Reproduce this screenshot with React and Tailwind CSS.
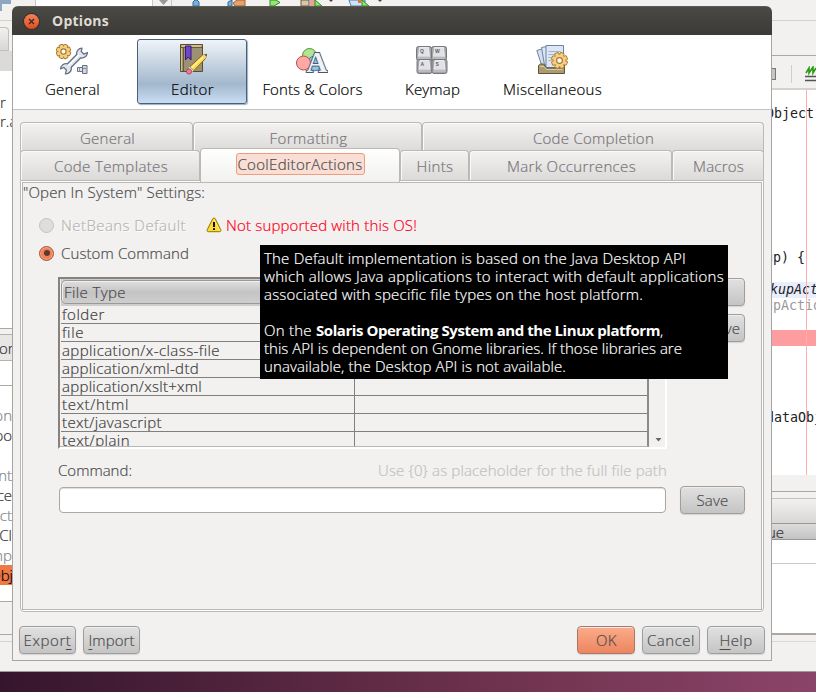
import { useLayoutEffect, useRef } from "react";

/* Text spread to an exact advance width through letter spacing. */
function Fit({ w, className = "", children }) {
  const ref = useRef(null);
  useLayoutEffect(() => {
    const el = ref.current;
    el.style.letterSpacing = "0px";
    const natural = el.getBoundingClientRect().width;
    el.style.letterSpacing = (w - natural) / el.textContent.length + "px";
  }, [w]);
  return (
    <span ref={ref} className={"inline-block shrink-0 whitespace-pre " + className}>
      {children}
    </span>
  );
}

function Gear({ cx, cy, r }) {
  const teeth = [0, 45, 90, 135, 180, 225, 270, 315];
  return (
    <g transform={`translate(${cx} ${cy})`}>
      {teeth.map((a) => (
        <rect key={a} x="-2" y={-r} width="4" height="5" rx="1" transform={`rotate(${a + 22})`} fill="#f3c874" stroke="#a9772b" />
      ))}
      <circle r={r - 2} fill="#f5cf83" stroke="#b98535" strokeWidth="0.7" />
      {teeth.map((a) => (
        <rect key={a} x="-1.5" y={-r + 0.6} width="3" height="4" transform={`rotate(${a + 22})`} fill="#f5cf83" />
      ))}
      <circle r={r * 0.36} fill="#fff" stroke="#a9772b" strokeWidth="1.2" />
    </g>
  );
}

function GeneralIcon() {
  return (
    <svg width="32" height="32" viewBox="0 0 32 32">
      <Gear cx={7.5} cy={7.5} r={7.2} />
      <path
        d="M26 4.200c-3.500.2-5.800 2.800-5.300 6.300L11.500 19.800c-3.500-.7-6.700 1.500-7 5l3.300-1.300 2.600 2.400-1 3.900c3.700.3 6.500-2.800 5.900-6.500l9.200-9.300c3.600.6 6.700-1.900 7-5.500l-3.500 1.700-2.800-2.600z"
        fill="#e1e6ee"
        stroke="#66717f"
        strokeWidth="1.300"
        strokeLinejoin="round"
      />
      <path d="M12.500 21.500L23 11" stroke="#fff" strokeWidth="1.500" />
      <path d="M21.500 23.500h5v4h-5z" fill="#dfe4ea" stroke="#66717f" />
      <path d="M26.500 21.500h4.500v8h-4.500z" fill="#cfd6de" stroke="#66717f" />
      <path d="M23.500 23.500v4M27 24.500h3" stroke="#8993a0" />
    </svg>
  );
}

function EditorIcon() {
  return (
    <svg width="32" height="32" viewBox="0 0 32 32">
      <path d="M4.500.5h22v27h-22z" fill="#9c9174" stroke="#5c4e20" />
      <path d="M5.500 2h20" stroke="#d8cfae" strokeWidth="1.500" />
      <path d="M5 3.500h21M7.500 4v23" stroke="#5c4e20" strokeWidth=".8" />
      <path d="M5.500 4v23" stroke="#c9bf9f" />
      <path d="M9.500 2v14l2.700-3 2.800 3V2z" fill="#6d48c8" stroke="#3a1680" />
      <path d="M14 22.500L26 11.500l4.500-1.200-1 4.200L17.500 27z" fill="#fbd84e" stroke="#8e6508" strokeLinejoin="round" />
      <path d="M15.500 24L27 13" stroke="#fff3a4" strokeWidth="1.500" />
      <path d="M26 11.500l4.500-1.200-1 4.200z" fill="#ecd2a4" />
      <path d="M28.800 10.800l2-.8-.6 2.200z" fill="#222" />
      <path d="M13.800 22.600l3.800 4.100-1.400 1.400-3.800-4z" fill="#e8e8ee" stroke="#888" strokeWidth=".5" />
      <circle cx="13" cy="27.500" r="2.600" fill="#f27c90" stroke="#a83a50" strokeWidth=".8" />
    </svg>
  );
}

function FontsIcon() {
  return (
    <svg width="32" height="32" viewBox="0 0 32 32">
      <circle cx="13.500" cy="11.500" r="7" fill="#b0e592" stroke="#559038" />
      <circle cx="18.500" cy="19.500" r="7.300" fill="#8fc3ee" stroke="#4479ad" />
      <circle cx="7.500" cy="19" r="7" fill="#ffa9a5" stroke="#b54e4e" />
      <text x="10.500" y="28" fontFamily="Liberation Serif, serif" fontWeight="700" fontSize="29" fill="#eef2f7" stroke="#4c5966" strokeWidth="2" paintOrder="stroke">
        A
      </text>
    </svg>
  );
}

function Key({ x, y, label }) {
  return (
    <g transform={`translate(${x} ${y})`}>
      <rect x=".5" y=".5" width="15" height="14" rx="2" fill="#a4a5aa" stroke="#77787d" />
      <path d="M3.500 1.500h9l1 9h-11z" fill="#e2e2e6" stroke="#f4f4f6" strokeWidth=".8" />
      <path d="M1.500 13L3 10.500h10l1.500 2.500" fill="#bbbcc1" />
      <text x="4" y="6.700" fontFamily="Liberation Sans, sans-serif" fontWeight="700" fontSize="5" fill="#5c5e64">
        {label}
      </text>
    </g>
  );
}

function KeymapIcon() {
  return (
    <svg width="32" height="32" viewBox="0 0 32 32">
      <Key x={0} y={2} label="Q" />
      <Key x={15} y={2} label="W" />
      <Key x={0.5} y={15} label="A" />
      <Key x={15.5} y={15} label="S" />
    </svg>
  );
}

function MiscIcon() {
  return (
    <svg width="32" height="32" viewBox="0 0 32 32">
      <path d="M.8 6.500l6-1.800 4 16-5 1z" fill="#d5dff0" stroke="#6d83a3" />
      <path d="M5.500 3.500l8-1.500 1 18-6 1z" fill="#dbe5f3" stroke="#6d83a3" />
      <path d="M10 1.500h17.500v22H10z" fill="#dce7f5" stroke="#6d83a3" />
      <path d="M12.500 7.500h12M12.500 10.500h7M12.500 13.500h4M12.500 16.500h3" stroke="#a5b3c8" />
      <path d="M2.500 29.500v-8l2-1.500h3l3 4h13l5-3v8.500z" fill="#a99b75" stroke="#62542c" />
      <path d="M4 22.500h4l2.500 3h16" stroke="#d5cba9" fill="none" />
      <Gear cx={23.5} cy={16.5} r={8} />
    </svg>
  );
}

function WarningIcon() {
  return (
    <svg width="16" height="16" viewBox="0 0 16 16">
      <path d="M8 1c.7 0 1.100.5 1.400 1l5.400 10.800c.5 1 0 1.900-1.200 1.900H2.400c-1.200 0-1.700-.9-1.200-1.900L6.600 2C6.900 1.500 7.300 1 8 1z" fill="#fbdc32" stroke="#8c7500" />
      <path d="M8 2.500L13.500 13.500" stroke="#fff29a" strokeWidth=".7" />
      <path d="M8 5v5" stroke="#111" strokeWidth="2" />
      <path d="M8 11.200v1.900" stroke="#111" strokeWidth="2" />
    </svg>
  );
}

const tools = [
  { name: "General", w: 55, Icon: GeneralIcon },
  { name: "Editor", w: 43, Icon: EditorIcon, on: true },
  { name: "Fonts & Colors", w: 100, Icon: FontsIcon },
  { name: "Keymap", w: 55, Icon: KeymapIcon },
  { name: "Miscellaneous", w: 99, Icon: MiscIcon },
];

function Tool({ name, w, Icon, on }) {
  return (
    <div
      className={
        "flex h-[65px] w-[110px] flex-col items-center rounded-[3px] border pt-1 text-black " +
        (on
          ? "border-[#44607c] bg-linear-to-b from-[#f0f4f9] via-[#a3b8cd] via-70% to-[#c9def4] shadow-[1px_1px_1px_#9fb0c0]"
          : "border-transparent")
      }
    >
      <Icon />
      <Fit w={w} className="mt-[4px] ml-px leading-[18px]">{name}</Fit>
    </div>
  );
}

function Tab({ className, w, children }) {
  return (
    <div
      className={
        "flex shrink-0 justify-center rounded-t-[4px] border border-b-0 border-[#bcb9b5] bg-linear-to-b from-[#f3f2f1] to-[#dcdad8] text-[#77757a] shadow-[inset_1px_1px_0_#fafafa] " +
        className
      }
    >
      <Fit w={w} className="ml-px leading-[18px]">{children}</Fit>
    </div>
  );
}

function Button({ className = "", w, tone = "border-[#a09e9c] from-[#e2e1e1] to-[#c4c4c4]", children }) {
  return (
    <div
      className={
        "flex h-[28px] shrink-0 items-center justify-center rounded-[4px] border bg-linear-to-b shadow-[0_1px_1px_#d6d4d2,inset_0_1px_0_#efeeee] " +
        tone + " " + className
      }
    >
      {children && <Fit w={w} className="leading-[18px]">{children}</Fit>}
    </div>
  );
}

const U = ({ children }) => <span className="underline decoration-1 underline-offset-[3px]">{children}</span>;

const files = [
  ["folder", 43], ["file", 22], ["application/x-class-file", 158], ["application/xml-dtd", 137],
  ["application/xslt+xml", 140], ["text/html", 67], ["text/javascript", 100], ["text/plain", 68],
];

function FileTable() {
  return (
    <div className="flex h-[172px] w-[609px] border-t-2 border-r-2 border-b-2 border-l-2 border-t-[#858381] border-r-white border-b-white border-l-[#858381] bg-[#f2f1f0]">
      <div className="flex h-[168px] w-[589px] flex-col overflow-hidden border-r-2 border-b border-r-[#8c8a89] border-b-[#b9b6b2] pl-px">
        <div className="flex h-[27px] shrink-0 bg-[#d0cecc] pt-px pb-[2px]">
          <div className="flex w-[294px] items-center rounded-l-[5px] border border-[#9b9998] bg-linear-to-b from-[#dfdfdf] via-[#c4c4c4] to-[#cecece] pl-[2px] shadow-[inset_1px_1px_0_#f0f0f0]">
            <Fit w={62} className="leading-[18px]">File Type</Fit>
          </div>
          <div className="flex-1 rounded-r-[5px] border border-[#9b9998] bg-[#cccccc]" />
        </div>
        {files.map(([name, w]) => (
          <div key={name} className="flex h-[18px] shrink-0 border-b border-[#808080] text-[#3c3c3c]">
            <div className="flex w-[294px] items-start border-r border-[#808080] pl-px">
              <Fit w={w} className="leading-[16px]">{name}</Fit>
            </div>
          </div>
        ))}
      </div>
      <div className="flex flex-1 items-end justify-center pb-[5px] pl-[3px]">
        <svg width="7" height="4" viewBox="0 0 7 4"><path d="M.5 0h6L3.500 3.500z" fill="#666" /></svg>
      </div>
    </div>
  );
}

function Panel() {
  return (
    <div className="h-[432px] w-[744px] rounded-b-[4px] border border-[#bab8b4] bg-white p-px">
      <div className="flex h-[428px] flex-col border border-[#bab8b4] bg-[#f2f1f0]">
        <div className="h-[20px]"><Fit w={182} className="leading-[18px]">"Open In System" Settings:</Fit></div>
        <div className="mt-[13px] flex h-[18px] items-center pl-[16px]">
          <div className="mr-[7px] size-[15px] rounded-full border border-[#c5c3c1] bg-[#dedddc]" />
          <Fit w={125} className="leading-[18px] text-[#b7b4b2] [text-shadow:1px_1px_0_#fff]">NetBeans Default</Fit>
          <div className="ml-[20px] w-[20px]"><WarningIcon /></div>
          <Fit w={191} className="leading-[18px] text-[#ff001c]">Not supported with this OS!</Fit>
        </div>
        <div className="mt-[10px] flex h-[18px] items-center pl-[16px]">
          <div className="mr-[7px] flex size-[15px] items-center justify-center rounded-full border border-[#a4583a] bg-[#f28159] shadow-[inset_0_0_0_1px_#f8a585]">
            <div className="size-[6px] rounded-full bg-[#593a30]" />
          </div>
          <Fit w={128} className="leading-[18px]">Custom Command</Fit>
        </div>
        <div className="mt-[15px] flex pl-[35px]">
          <FileTable />
          <div className="ml-[13px] flex flex-col gap-[8px] pt-px">
            <Button className="w-[65px]" />
            <Button className="w-[65px]" w={55}>Remove</Button>
          </div>
        </div>
        <div className="mt-[12px] flex h-[20px] w-[644px] justify-between pl-[35px]">
          <Fit w={74} className="leading-[18px]">Command:</Fit>
          <Fit w={289} className="leading-[18px] text-[#c2c0be]">{"Use {0} as placeholder for the full file path"}</Fit>
        </div>
        <div className="mt-[5px] flex items-center pl-[36px]">
          <div className="h-[26px] w-[607px] rounded-[4px] border border-[#aaa7a4] bg-white shadow-[inset_0_1px_1px_#ddd]" />
          <Button className="ml-[14px] w-[65px]" w={32}>Save</Button>
        </div>
      </div>
    </div>
  );
}

function Options() {
  return (
    <div className="absolute top-[6px] left-[12px] flex h-[655px] w-[760px] flex-col overflow-hidden rounded-t-[6px] bg-[#f2f1f0] text-[#4c4c4c]">
      <div className="flex h-[29px] shrink-0 items-center border-t border-t-[#5b5a55] bg-linear-to-b from-[#4a4944] to-[#3b3a36] pl-[12px]">
        <div className="flex size-[15px] items-center justify-center rounded-full bg-linear-to-b from-[#f28258] to-[#df4b1b] shadow-[0_0_0_1px_#302f2b]">
          <svg width="7" height="7" viewBox="0 0 7 7"><path d="M1 1l5 5M6 1L1 6" stroke="#3b2a20" strokeWidth="1.300" /></svg>
        </div>
        <Fit w={57} className="ml-[13px] text-[14px] leading-[18px] font-bold text-[#dfdbd2] [-webkit-text-stroke:0px]">Options</Fit>
      </div>
      <div className="flex flex-1 flex-col border border-t-0 border-[#a7a5a2]">
        <div className="flex h-[75px] shrink-0 gap-[10px] border-b border-[#c4c2bf] bg-white pt-[4px] pl-[4px]">
          {tools.map((t) => <Tool key={t.name} {...t} />)}
        </div>
        <div className="flex flex-col pt-[12px] pl-[7px]">
          <div className="flex">
            <Tab className="h-[30px] w-[173px] pt-[6px] pl-px" w={55}>General</Tab>
            <Tab className="h-[30px] w-[229px] pt-[6px] pl-px" w={78}>Formatting</Tab>
            <Tab className="h-[30px] w-[342px] pt-[6px]" w={121}>Code Completion</Tab>
          </div>
          <div className="z-10 -mt-[4px] flex h-[32px]">
            <Tab className="mt-[2px] h-[30px] w-[180px] pt-[6px] pl-px" w={114}>Code Templates</Tab>
            <div className="flex h-[34px] w-[200px] shrink-0 justify-center rounded-t-[4px] border border-b-0 border-[#bcb9b5] bg-linear-to-b from-white to-[#f2f1f0] pt-[4px]">
              <div className="flex h-[22px] w-[129px] items-center justify-center rounded-[3px] border border-[#f29b78] bg-[#f8ded4]">
                <Fit w={125} className="leading-[18px]">CoolEditorActions</Fit>
              </div>
            </div>
            <Tab className="mt-[2px] h-[30px] w-[69px] pt-[6px]" w={37}>Hints</Tab>
            <Tab className="mt-[2px] h-[30px] w-[203px] pt-[6px] pl-px" w={129}>Mark Occurrences</Tab>
            <Tab className="mt-[2px] h-[30px] w-[92px] pt-[6px]" w={51}>Macros</Tab>
          </div>
          <Panel />
        </div>
        <div className="mt-[14px] flex gap-[7px] pr-[6px] pl-[6px]">
          <Button className="w-[57px]" w={48}>Expor<U>t</U></Button>
          <Button className="w-[57px]" w={46}><U>I</U>mport</Button>
          <Button className="ml-auto w-[58px] pl-px" w={21} tone="border-[#a9786a] from-[#fbab8a] to-[#ec8660]">OK</Button>
          <Button className="w-[58px]" w={48}>Cancel</Button>
          <Button className="w-[58px]" w={33}><U>H</U>elp</Button>
        </div>
      </div>
    </div>
  );
}

/* Each tooltip line is a list of runs: width, text, bold. */
const tip = [
  [[422, "The Default implementation is based on the Java Desktop API"]],
  [[460, "which allows Java applications to interact with default applications"]],
  [[379, "associated with specific file types on the host platform."]],
  [],
  [[52, "On the "], [344, "Solaris Operating System and the Linux platform", true], [3, ","]],
  [[418, "this API is dependent on Gnome libraries. If those libraries are"]],
  [[302, "unavailable, the Desktop API is not available."]],
];

function Tooltip() {
  return (
    <div className="absolute top-[245px] left-[260px] flex h-[134px] w-[468px] flex-col bg-black pt-[4px] pl-[4px] text-white">
      {tip.map((runs, i) => (
        <div key={i} className="flex h-[18px]">
          {runs.map(([w, text, bold]) => (
            <Fit key={text} w={w} className={bold ? "leading-[18px] font-bold [-webkit-text-stroke:0px]" : "leading-[18px]"}>{text}</Fit>
          ))}
        </div>
      ))}
    </div>
  );
}

const outline = [["on", "text-[#85838a]"], ["oo", "text-[#333]"], null, ["nt", "text-[#85838a]"], ["ce", "text-[#333]"], ["ct", "text-[#85838a]"], ["Cl", "text-[#333]"], ["mp", "text-[#85838a]"]];

function LeftEdge() {
  return (
    <div className="flex w-[13px] shrink-0 flex-col overflow-hidden text-[#333]">
      <div className="h-[21px] border-b border-[#d4d2d0]">
        <div className="h-[4px] w-[11px] bg-[#8fa6c0]" />
        <div className="h-[7px] w-[2px] bg-[#8fa6c0]" />
      </div>
      <div className="mt-[6px] h-[24px] w-[9px] rounded-tr-[4px] border border-l-0 border-[#c2bfbc] bg-linear-to-b from-[#f2f1f0] to-[#d9d7d5]" />
      <div className="h-[20px] bg-[#dcdad8]" />
      <div className="h-[258px] border-b border-[#aaa7a4] bg-white pt-[22px]">
        <div className="h-[18px] leading-[18px]">r</div>
        <div className="h-[20px] leading-[20px]">r.a</div>
      </div>
      <div className="h-[5px]" />
      <div className="flex h-[27px] items-center border-y border-[#b5b2af] bg-[#e9e7e5]"><span className="-ml-px">or</span></div>
      <div className="h-[25px] border-b border-[#aaa7a4] bg-white" />
      <div className="h-[216px] border-b border-[#aaa7a4] bg-white pt-[19px]">
        {outline.map((l, i) => (
          <div key={i} className="flex h-[20px] justify-end pr-px leading-[20px]">
            {l && <span className={l[1]}>{l[0]}</span>}
          </div>
        ))}
        <div className="flex h-[20px] justify-end bg-[#f07746] leading-[20px] text-black">Obj</div>
      </div>
      <div className="h-[33px] border-b border-[#aaa7a4]" />
      <div className="h-[7px] border-b border-[#d4d2d0]" />
    </div>
  );
}

function TopEdge() {
  return (
    <div className="flex h-[6px] flex-1 items-start">
      <div className="ml-[22px] h-[6px] w-[118px] border-x border-[#c9c7c4] bg-white" />
      <svg className="ml-[6px]" width="9" height="6" viewBox="0 0 9 6"><path d="M0 0h9L4.500 5z" fill="#999" /></svg>
      <div className="ml-[3px] h-[6px] w-px bg-[#c9c7c4]" />
      <svg className="ml-[18px]" width="250" height="6" viewBox="0 0 250 6">
        <path d="M3 6V2l2-2h2l2 2v4z" fill="#75b3dd" stroke="#366a9a" />
        <path d="M38 6V2l4-2v6z" fill="#75b3dd" stroke="#366a9a" />
        <path d="M45 6l-2-3 4-3h8v6z" fill="#e2a36c" stroke="#9f6532" />
        <path d="M80 0h6l4 2.500-6 3.500h-4z" fill="#9de277" stroke="#229222" />
        <path d="M111 0h8v6h-8z" fill="#d8c7a5" stroke="#6b5e50" />
        <path d="M120 0h5v6h-5z" fill="#e8a09a" />
        <path d="M125 0l7 6h-7z" fill="#9de277" stroke="#229222" />
        <path d="M139 0h4l-2 2z" fill="#444" />
        <path d="M159 0h16v6h-14z" fill="#cfe3f4" stroke="#4d82b5" />
        <path d="M168 0h3v3h-3z" fill="#e97531" />
        <path d="M172 0l7 6h-7z" fill="#9de277" stroke="#229222" />
        <path d="M188 0h4l-2 2z" fill="#444" />
      </svg>
    </div>
  );
}

function CodeLine({ className, children }) {
  return <div className={"h-[16px] leading-[16px] whitespace-pre " + className}>{children}</div>;
}

function RightEdge() {
  return (
    <div className="flex w-[45px] shrink-0 flex-col overflow-hidden text-[#333]">
      <div className="h-[21px] shrink-0 border-b border-[#d4d2d0]" />
      <div className="h-[35px] shrink-0 border-b border-[#aaa7a4]" />
      <div className="flex h-[34px] shrink-0 items-center border-b-2 border-[#d4d2d0] pt-[3px]">
        <div className="h-[12px] w-[5px] border border-[#777] bg-[#c5c5c5]" />
        <div className="ml-[15px] h-[18px] w-px bg-[#d0cecc]" />
        <svg className="ml-[13px]" width="11" height="16" viewBox="0 0 11 16">
          <path d="M1 7l3-5v5l4-6v6l3-5" fill="none" stroke="#2c9a15" strokeWidth="1.600" />
          <path d="M0 10.500h11M0 14.500h11" stroke="#555" strokeWidth="1.500" />
        </svg>
      </div>
      <div className="flex h-[385px] shrink-0 bg-white font-['DejaVu_Sans_Mono',monospace] text-[13.3px] font-normal text-[#222] [-webkit-text-stroke:0px]">
        <div className="w-[35px] shrink-0 pt-[16px]">
          <CodeLine className="-ml-[5px]">Object</CodeLine>
          <CodeLine className="mt-[128px] -ml-[6px]">up) {"{"}</CodeLine>
          <div className="mt-[16px] w-[45px] bg-[#e8eefb]"><CodeLine className="-ml-px italic">kupAct</CodeLine></div>
          <CodeLine className="-ml-[6px] text-[#9a9a9a]">upActio</CodeLine>
          <div className="mt-[16px] h-[16px] w-[45px] bg-[#fd9d9f]" />
          <CodeLine className="mt-[64px] -ml-[5px]">dataObj</CodeLine>
        </div>
        <div className="z-10 w-px bg-[#ffadad]" />
      </div>
      <div className="h-[17px] shrink-0 border-b border-[#aaa7a4]" />
      <div className="h-[7px] shrink-0 border-b border-[#c2bfbc]" />
      <div className="h-[24px] shrink-0 bg-linear-to-b from-[#f2f1f0] to-[#d9d7d5]" />
      <div className="flex h-[17px] shrink-0 items-center border-y border-[#999795] bg-linear-to-b from-[#dcdcdc] to-[#c3c3c3]"><span className="-ml-[4px]">ue</span></div>
      <div className="h-[24px] shrink-0 border-b border-[#cccac8] bg-white" />
      <div className="h-[71px] shrink-0 border-b-2 border-[#aaa7a4] bg-white" />
      <div className="h-[7px] shrink-0 border-b border-[#dbd9d7]" />
    </div>
  );
}

export default function App() {
  return (
    <div className="relative flex h-[692px] w-[816px] flex-col overflow-hidden bg-[#f2f1f0] font-['Open_Sans',sans-serif] text-[15px] leading-[18px] font-light [-webkit-text-stroke:0.2px]">
      <div className="flex h-[672px] border-b border-[#9d9a98]">
        <LeftEdge />
        <TopEdge />
        <RightEdge />
      </div>
      <div className="h-[20px] bg-linear-to-r from-[#35152d] via-[#6e324d] via-60% to-[#8b4469]" />
      <Options />
      <Tooltip />
    </div>
  );
}
